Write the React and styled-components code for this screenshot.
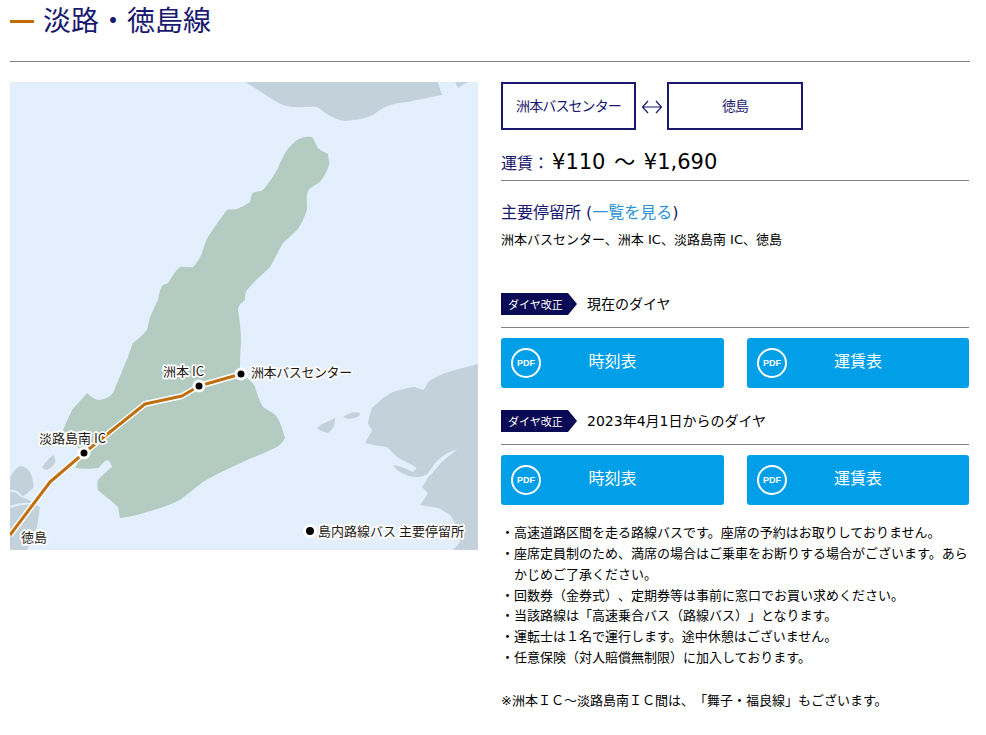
import React from 'react';
import styled, { createGlobalStyle } from 'styled-components';

const navy = '#191970';
const rule = '#808080';
const sky = '#009fe8';
const water = '#e4effe';
const sans = '"DejaVu Sans", "Noto Sans CJK JP", sans-serif';
const mapSans = '"Noto Sans CJK JP", "Noto Sans", sans-serif';

const GlobalStyle = createGlobalStyle`
  html, body { margin: 0; padding: 0; background: #fff; }
  body { font-family: ${sans}; color: #000; text-spacing-trim: space-all; }
`;

const Page = styled.div`
  width: 960px;
  padding: 0 0 0 10px;
`;

const Title = styled.h1`
  display: flex;
  align-items: center;
  gap: 9px;
  height: 62px;
  margin: 0;
  padding-bottom: 18px;
  box-sizing: border-box;
  border-bottom: 1px solid ${rule};
  font-size: 28px;
  font-weight: 400;
  line-height: 41px;
  color: ${navy};
  &::before {
    content: '';
    width: 24px;
    height: 3px;
    background: #c06c00;
  }
`;

const Columns = styled.div`
  display: grid;
  grid-template-columns: 468px 468px;
  gap: 23px;
  margin-top: 20px;
`;

const MapBox = styled.svg`
  display: block;
  width: 468px;
  height: 468px;
`;

const Side = styled.div`
  display: flex;
  flex-direction: column;
`;

const Route = styled.div`
  display: grid;
  grid-template-columns: 135px 31px 136px;
  align-items: center;
  height: 48px;
`;

const Stop = styled.div`
  height: 48px;
  box-sizing: border-box;
  border: 2px solid ${navy};
  padding-bottom: 2px;
  display: flex;
  align-items: center;
  justify-content: center;
  font-size: 14px;
  letter-spacing: -0.9px;
  color: ${navy};
`;

const Arrow = styled.svg`
  display: block;
  width: 31px;
  height: 14px;
  margin-top: 2px;
`;

const Fare = styled.div`
  height: 51px;
  padding-top: 15px;
  box-sizing: border-box;
  border-bottom: 1px solid ${rule};
  font-size: 16px;
  line-height: 34px;
  color: ${navy};
  white-space: nowrap;
`;

const Amount = styled.span`
  margin-left: 3px;
  font-size: 21px;
  word-spacing: 2px;
  color: #000;
`;

const StopsHead = styled.div`
  margin-top: 20px;
  font-size: 16px;
  line-height: 24px;
  color: ${navy};
`;

const StopsLink = styled.a`
  color: #2a93d5;
`;

const StopsText = styled.p`
  margin: 5px 0 0;
  font-size: 13px;
  line-height: 20px;
  color: #000;
`;

const TimetableHead = styled.div`
  display: flex;
  align-items: center;
  gap: 10px;
  height: 22px;
  padding-bottom: 12px;
  margin-top: ${p => p.$first ? 43 : 22}px;
  border-bottom: 1px solid ${rule};
  font-size: 14px;
`;

const HeadLabel = styled.span`
  padding-bottom: 2px;
`;

const Badge = styled.span`
  width: 76px;
  height: 22px;
  display: flex;
  align-items: center;
  padding-left: 7px;
  box-sizing: border-box;
  background: #0b0b55;
  clip-path: polygon(0 0, 67px 0, 100% 50%, 67px 100%, 0 100%);
  font-size: 11px;
  color: #fff;
`;

const ButtonRow = styled.div`
  display: grid;
  grid-template-columns: 223px 222px;
  gap: 23px;
  margin-top: 10px;
`;

const PdfButton = styled.a`
  position: relative;
  height: 50px;
  box-sizing: border-box;
  padding-bottom: 6px;
  display: flex;
  align-items: center;
  justify-content: center;
  border-radius: 3px;
  background: ${sky};
  font-size: 16px;
  color: #fff;
`;

const PdfMark = styled.span`
  position: absolute;
  left: 10px;
  top: 10px;
  width: 30px;
  height: 30px;
  box-sizing: border-box;
  border: 2px solid #fff;
  border-radius: 50%;
  display: flex;
  align-items: center;
  justify-content: center;
  font-family: "Liberation Sans", sans-serif;
  font-size: 9px;
  font-weight: 700;
`;

const Notes = styled.ul`
  list-style: none;
  margin: 18px 0 0;
  padding: 0;
  font-size: 13px;
  line-height: 20.85px;
`;

const Note = styled.li`
  padding-left: 13px;
  text-indent: -13px;
  &::before {
    content: '・';
    display: inline-block;
    width: 13px;
    text-indent: 0;
  }
`;

const Remark = styled.p`
  margin: 21px 0 0;
  font-size: 13px;
  line-height: 21px;
`;

const MapLabel = styled.text`
  font-family: ${mapSans};
  font-size: 13px;
  letter-spacing: ${p => p.$tight ? '-0.4px' : '0'};
  fill: #231815;
  stroke: #fff;
  stroke-width: 3.5px;
  stroke-linejoin: round;
  paint-order: stroke;
`;

const lineD = 'M241 374 L199 386 L182 396 L145 404 L110 432 L84 453 L50 482 L10 535';

const RouteMap = () => (
  <MapBox viewBox="10 82 468 468" role="img" aria-label="淡路・徳島線 路線図">
    <rect x="10" y="82" width="468" height="468" fill={water} />
    <g fill="#c3d1da">
      <path d="M245 82 C262 92 272 100 283 105 C295 109 306 106 317 107 C323 110 328 118 345 121 C358 120 367 118 373 115 C382 108 390 103 408 102 C420 99 432 97 442 95 L438 83 L438 82 Z" />
      <path d="M455 82 L468 82 L458 88 Z" />
      <path d="M478 364 C466 367 455 370 445 373 C438 376 432 379 428 382 C426 386 425 389 423 390 C420 389 416 387 413 387 C406 388 399 390 393 392 C389 394 386 396 383 398 C379 402 375 405 372 408 C370 413 369 418 368 423 C369 426 371 428 372 430 C370 435 367 439 365 443 C372 445 380 446 387 447 C391 451 394 454 397 457 C403 461 411 464 417 468 L413 472 C407 469 400 466 393 465 C395 468 397 470 400 472 C405 475 411 477 417 477 C422 477 426 475 430 473 C428 478 425 483 422 487 C424 489 426 491 428 493 C426 497 423 501 420 505 C426 506 432 507 438 508 C442 510 446 512 450 515 C453 519 455 523 457 527 C458 532 459 537 460 542 C458 545 455 547 453 550 L478 550 Z" />
      <path d="M317 428 C322 423 330 421 335 418 C336 424 332 430 328 433 C324 432 320 431 317 428 Z" />
      <path d="M343 417 C348 413 356 411 360 413 C360 416 358 417 354 418 C350 419 346 419 343 417 Z" />
      <path d="M42 467 C46 462 50 457 53 455 C55 457 56 460 55 463 C52 467 49 469 47 470 C45 470 43 469 42 467 Z" />
      <path d="M10 477 C13 472 17 467 20 466 C25 466 29 470 31 474 C33 480 34 485 33 488 C29 492 25 495 22 497 C28 499 35 504 40 507 C39 514 38 520 37 527 C34 535 30 543 27 550 L10 550 Z" />
    </g>
    <path fill="none" stroke={water} strokeWidth="2" d="M10 507 C16 505 24 503 30 504 M10 491 C14 490 18 492 22 497" />
    <path fill={water} d="M458 449 C450 451 443 455 437 461 C433 466 430 470 426 476 L431 475 C434 471 437 467 441 463 C446 458 452 453 458 449 Z" />
    <path
      fill="#b3cbc1"
      d="M312 137 C315 141 316 145 318 148 C321 151 325 152 328 154 C328 158 330 162 329 165 C327 171 324 177 320 182 C316 185 310 187 308 191 C306 197 307 204 307 210 C304 218 301 225 297 230 C292 235 287 239 283 243 C278 251 275 259 270 267 C262 275 254 281 247 290 C245 293 245 297 245 300 C241 303 238 306 238 310 C240 322 241 332 241 343 C240 353 240 363 240 373 C248 379 253 382 255 387 C257 394 260 402 263 407 C269 411 274 413 277 417 C281 424 283 431 285 438 C283 442 280 445 277 447 C267 452 257 456 247 460 C232 467 216 474 203 482 C195 488 188 494 180 500 C170 505 158 509 147 512 C138 515 129 517 120 518 C119 515 119 510 118 507 C112 501 104 496 98 490 C97 486 97 483 98 480 C102 475 107 471 112 467 C111 464 110 461 107 460 C103 462 101 466 98 468 C91 469 83 469 75 468 C78 463 80 458 82 453 C79 448 76 444 72 440 C68 437 65 433 63 430 C66 423 69 416 72 410 C77 404 83 398 87 393 C91 397 95 400 100 400 C105 399 110 397 113 393 C118 381 123 369 128 357 C130 351 131 347 133 343 C138 339 143 335 147 330 C148 326 149 321 150 317 C153 311 155 305 158 300 C159 295 160 288 163 285 C165 284 167 284 168 283 C172 277 175 271 180 267 C184 266 189 268 193 267 C197 263 200 258 202 253 C204 247 205 242 208 237 C214 228 220 219 227 210 C230 209 234 210 237 209 C241 207 246 205 250 202 C251 198 251 195 253 193 C256 191 260 192 263 190 C268 184 273 177 277 170 C280 163 283 156 287 150 C290 146 293 143 297 140 C302 137 307 136 312 137 Z"
    />
    <path fill="none" stroke="#fff" strokeWidth="6" strokeLinejoin="round" d={lineD} />
    <path fill="none" stroke="#bf6e10" strokeWidth="3" strokeLinejoin="round" d={lineD} />
    <g fill="#000" stroke="#fff" strokeWidth="3">
      <circle cx="241" cy="374" r="5" />
      <circle cx="199" cy="386" r="5" />
      <circle cx="84" cy="453" r="5" />
      <circle cx="310" cy="531" r="5.5" />
    </g>
    <MapLabel x="251" y="377" $tight>洲本バスセンター</MapLabel>
    <MapLabel x="163" y="376">洲本 IC</MapLabel>
    <MapLabel x="39" y="443">淡路島南 IC</MapLabel>
    <MapLabel x="21" y="542">徳島</MapLabel>
    <MapLabel x="318" y="536">島内路線バス 主要停留所</MapLabel>
  </MapBox>
);

const Timetable = ({ first, label }) => (
  <>
    <TimetableHead $first={first}>
      <Badge>ダイヤ改正</Badge>
      <HeadLabel>{label}</HeadLabel>
    </TimetableHead>
    <ButtonRow>
      <PdfButton><PdfMark>PDF</PdfMark>時刻表</PdfButton>
      <PdfButton><PdfMark>PDF</PdfMark>運賃表</PdfButton>
    </ButtonRow>
  </>
);

const App = () => (
  <Page>
    <GlobalStyle />
    <Title>淡路・徳島線</Title>
    <Columns>
      <RouteMap />
      <Side>
        <Route>
          <Stop>洲本バスセンター</Stop>
          <Arrow viewBox="0 0 31 14">
            <path d="M12 1 L6.5 7 L12 13 M6.5 7 H25.5 M20 1 L25.5 7 L20 13" fill="none" stroke={navy} strokeWidth="1.2" />
          </Arrow>
          <Stop>徳島</Stop>
        </Route>
        <Fare>運賃：<Amount>¥110 ～ ¥1,690</Amount></Fare>
        <StopsHead>主要停留所 (<StopsLink>一覧を見る</StopsLink>)</StopsHead>
        <StopsText>洲本バスセンター、洲本 IC、淡路島南 IC、徳島</StopsText>
        <Timetable first label="現在のダイヤ" />
        <Timetable label="2023年4月1日からのダイヤ" />
        <Notes>
          <Note>高速道路区間を走る路線バスです。座席の予約はお取りしておりません。</Note>
          <Note>座席定員制のため、満席の場合はご乗車をお断りする場合がございます。あらかじめご了承ください。</Note>
          <Note>回数券（金券式）、定期券等は事前に窓口でお買い求めください。</Note>
          <Note>当該路線は「高速乗合バス（路線バス）」となります。</Note>
          <Note>運転士は１名で運行します。途中休憩はございません。</Note>
          <Note>任意保険（対人賠償無制限）に加入しております。</Note>
        </Notes>
        <Remark>※洲本ＩＣ～淡路島南ＩＣ間は、「舞子・福良線」もございます。</Remark>
      </Side>
    </Columns>
  </Page>
);

export default App;
